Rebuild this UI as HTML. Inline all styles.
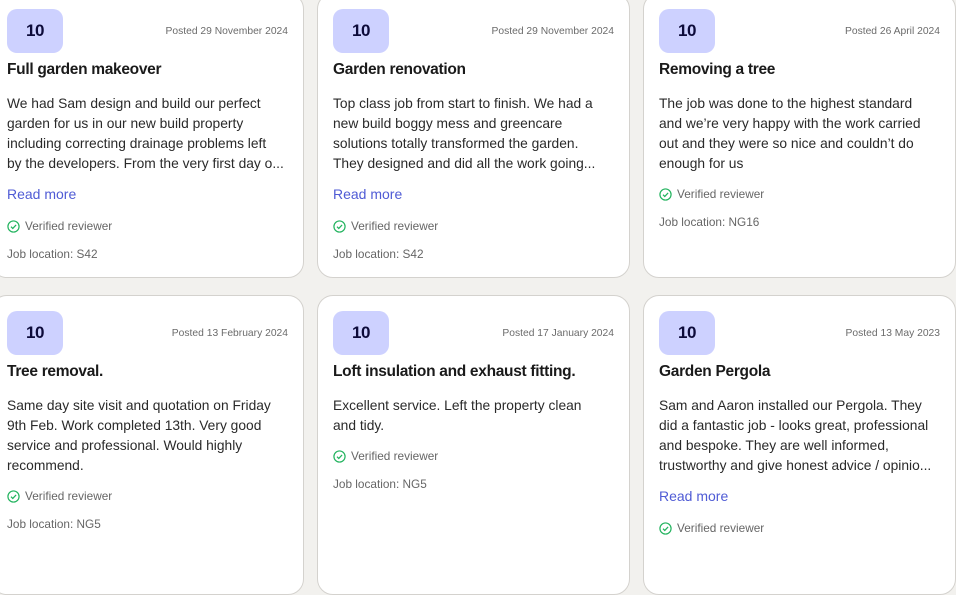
<!DOCTYPE html>
<html><head><meta charset="utf-8"><style>
*{margin:0;padding:0;box-sizing:border-box}
body{width:956px;height:544px;overflow:hidden;background:#f2f1ee;font-family:"Liberation Sans",sans-serif;position:relative}
.card{position:absolute;width:313px;background:#fff;border:1px solid #d4d2ce;border-radius:16px}
.card>*{position:absolute;white-space:nowrap}
.badge{left:15px;top:15px;width:56px;height:44px;border-radius:10px;background:#cdd1ff;color:#0d0b3a;font-size:17px;font-weight:bold;line-height:44px;text-align:center;letter-spacing:-0.5px}
.date{right:15px;top:31px;font-size:10.3px;color:#6b6b6b;line-height:14px;letter-spacing:0}
.title{left:15px;top:66px;font-size:15.5px;font-weight:bold;color:#1a1a1a;line-height:20px;letter-spacing:-0.3px}
.body{left:15px;top:100px;font-size:13.8px;color:#2a2a2a;line-height:20px;letter-spacing:0}
.more{left:15px;font-size:14px;color:#4f5bd5;line-height:20px}
.ver{left:15px;font-size:11.8px;color:#666;line-height:16px;display:flex;align-items:center;gap:5px}
.job{left:15px;font-size:11.8px;color:#666;line-height:16px}
</style></head><body>

<div class="card" style="left:-9px;top:-7px;height:285px">
<div class="badge">10</div><div class="date">Posted 29 November 2024</div>
<div class="title">Full garden makeover</div>
<div class="body">We had Sam design and build our perfect<br>garden for us in our new build property<br>including correcting drainage problems left<br>by the developers. From the very first day o...</div>
<div class="more" style="top:190px">Read more</div>
<div class="ver" style="top:224px"><svg width="13" height="13" viewBox="0 0 14 14"><circle cx="7" cy="7" r="6" fill="none" stroke="#22b35e" stroke-width="1.3"/><path d="M4.3 7.2l1.9 1.9 3.6-3.8" fill="none" stroke="#22b35e" stroke-width="1.3"/></svg>Verified reviewer</div>
<div class="job" style="top:252px">Job location: S42</div>
</div>

<div class="card" style="left:317px;top:-7px;height:285px">
<div class="badge">10</div><div class="date">Posted 29 November 2024</div>
<div class="title">Garden renovation</div>
<div class="body">Top class job from start to finish. We had a<br>new build boggy mess and greencare<br>solutions totally transformed the garden.<br>They designed and did all the work going...</div>
<div class="more" style="top:190px">Read more</div>
<div class="ver" style="top:224px"><svg width="13" height="13" viewBox="0 0 14 14"><circle cx="7" cy="7" r="6" fill="none" stroke="#22b35e" stroke-width="1.3"/><path d="M4.3 7.2l1.9 1.9 3.6-3.8" fill="none" stroke="#22b35e" stroke-width="1.3"/></svg>Verified reviewer</div>
<div class="job" style="top:252px">Job location: S42</div>
</div>

<div class="card" style="left:643px;top:-7px;height:285px">
<div class="badge">10</div><div class="date">Posted 26 April 2024</div>
<div class="title">Removing a tree</div>
<div class="body">The job was done to the highest standard<br>and we’re very happy with the work carried<br>out and they were so nice and couldn’t do<br>enough for us</div>
<div class="ver" style="top:192px"><svg width="13" height="13" viewBox="0 0 14 14"><circle cx="7" cy="7" r="6" fill="none" stroke="#22b35e" stroke-width="1.3"/><path d="M4.3 7.2l1.9 1.9 3.6-3.8" fill="none" stroke="#22b35e" stroke-width="1.3"/></svg>Verified reviewer</div>
<div class="job" style="top:220px">Job location: NG16</div>
</div>

<div class="card" style="left:-9px;top:295px;height:300px">
<div class="badge">10</div><div class="date">Posted 13 February 2024</div>
<div class="title">Tree removal.</div>
<div class="body">Same day site visit and quotation on Friday<br>9th Feb. Work completed 13th. Very good<br>service and professional. Would highly<br>recommend.</div>
<div class="ver" style="top:192px"><svg width="13" height="13" viewBox="0 0 14 14"><circle cx="7" cy="7" r="6" fill="none" stroke="#22b35e" stroke-width="1.3"/><path d="M4.3 7.2l1.9 1.9 3.6-3.8" fill="none" stroke="#22b35e" stroke-width="1.3"/></svg>Verified reviewer</div>
<div class="job" style="top:220px">Job location: NG5</div>
</div>

<div class="card" style="left:317px;top:295px;height:300px">
<div class="badge">10</div><div class="date">Posted 17 January 2024</div>
<div class="title">Loft insulation and exhaust fitting.</div>
<div class="body">Excellent service. Left the property clean<br>and tidy.</div>
<div class="ver" style="top:152px"><svg width="13" height="13" viewBox="0 0 14 14"><circle cx="7" cy="7" r="6" fill="none" stroke="#22b35e" stroke-width="1.3"/><path d="M4.3 7.2l1.9 1.9 3.6-3.8" fill="none" stroke="#22b35e" stroke-width="1.3"/></svg>Verified reviewer</div>
<div class="job" style="top:180px">Job location: NG5</div>
</div>

<div class="card" style="left:643px;top:295px;height:300px">
<div class="badge">10</div><div class="date">Posted 13 May 2023</div>
<div class="title">Garden Pergola</div>
<div class="body">Sam and Aaron installed our Pergola. They<br>did a fantastic job - looks great, professional<br>and bespoke. They are well informed,<br>trustworthy and give honest advice / opinio...</div>
<div class="more" style="top:190px">Read more</div>
<div class="ver" style="top:224px"><svg width="13" height="13" viewBox="0 0 14 14"><circle cx="7" cy="7" r="6" fill="none" stroke="#22b35e" stroke-width="1.3"/><path d="M4.3 7.2l1.9 1.9 3.6-3.8" fill="none" stroke="#22b35e" stroke-width="1.3"/></svg>Verified reviewer</div>
</div>

</body></html>
